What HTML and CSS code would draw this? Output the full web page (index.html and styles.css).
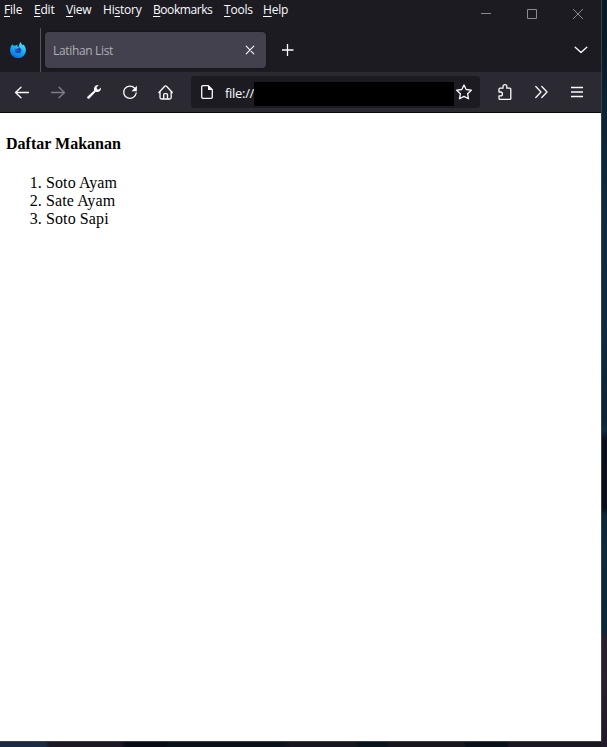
FILE: index.html
```html
<!DOCTYPE html>
<html lang="id">
<head>
<meta charset="utf-8">
<title>Latihan List</title>
<link rel="stylesheet" href="styles.css">
</head>
<body>
<div class="desktop">
<div class="window">
  <header class="titlebar">
    <nav class="menus">
      <span><u>F</u>ile</span><span><u>E</u>dit</span><span><u>V</u>iew</span><span>Hi<u>s</u>tory</span><span class="menu-wide"><u>B</u>ookmarks</span><span><u>T</u>ools</span><span><u>H</u>elp</span>
    </nav>
    <div class="controls">
      <svg width="12" height="12" viewBox="0 0 12 12"><path d="M1 5.5h10"/></svg>
      <svg width="12" height="12" viewBox="0 0 12 12"><path d="M1.500 1.500h9v9h-9z"/></svg>
      <svg width="12" height="12" viewBox="0 0 12 12"><path d="M1 1l10 10M11 1L1 11"/></svg>
    </div>
  </header>
  <div class="tabs">
    <div class="pinned">
      <svg width="16" height="16" viewBox="0 0 16 16">
        <defs>
          <linearGradient id="flame" x1=".8" y1="0" x2=".3" y2="1"><stop offset="0" stop-color="#62efff"/><stop offset=".45" stop-color="#18b5f5"/><stop offset="1" stop-color="#0868df"/></linearGradient>
        </defs>
        <path fill="url(#flame)" d="M2.400 2.200c.3.7.6 1.100 1 1.500.8-.2 1.600-.1 2.300.1.500-.6 1.200-1 1.900-1.100-.4.6-.5 1.100-.4 1.500l1.800.5c.1-1.900.500-3.500 1.700-4.600.4 1.800 1.400 2.400 2.300 3.400.2-.3.200-.7.100-1.200 1.800 1.500 2.800 3.600 2.800 6A7.900 7.700 0 0 1 .1 8.700C0 6 .9 3.700 2.400 2.200z"/>
        <path fill="#2942b5" d="M4.600 6.800l2.500.2c.5-.9 1.200-1.400 2-1.500 1.600.5 2.400 1.700 2.200 3.200-.3 1.800-1.600 2.700-3.300 2.600-1.800-.1-3.100-1.200-3.400-2.800 1 .6 2 .5 2.800-.2-1.400 0-2.300-.5-2.800-1.500z"/>
      </svg>
    </div>
    <div class="tab">
      <span>Latihan List</span>
      <svg width="10" height="10" viewBox="0 0 10 10"><path d="M1.200 1.200l7.600 7.600M8.800 1.200L1.200 8.800"/></svg>
    </div>
    <svg class="new-tab" width="12" height="12" viewBox="0 0 12 12"><path d="M5.500.5v11M0 6h11"/></svg>
    <svg class="all-tabs" width="14" height="8" viewBox="0 0 14 8"><path d="M1.200 1.200L7 6.600l5.800-5.400"/></svg>
  </div>
  <div class="toolbar">
    <div class="nav-buttons">
      <svg width="16" height="16" viewBox="0 0 16 16"><path d="M14.500 8.500H1.500M7 3.200L1.500 8.500 7 13.800"/></svg>
      <svg class="disabled" width="16" height="16" viewBox="0 0 16 16"><path d="M1.500 8.500h13M9 3.200l5.500 5.300L9 13.800"/></svg>
      <svg width="16" height="16" viewBox="0 0 16 16"><path class="solid" d="M12.700 1.200L10.600 3.300 11 5.200l1.900.3 2.100-2.100c.3 2.400-1.400 4.500-3.800 4.600-.6 0-1-.1-1.500-.2l-6.100 6.500c-.5.600-1.300.700-1.900.2-.7-.5-.7-1.400-.1-2l6.600-6.100C7.200 3.700 9.600.500 12.700 1.200z"/></svg>
      <svg width="16" height="16" viewBox="0 0 16 16"><path d="M12.700 4.200A6.300 6.100 0 1 0 14.200 9"/><path class="solid" d="M14.900 1.800v5.400H9.500z"/></svg>
      <svg width="16" height="16" viewBox="0 0 16 16"><path d="M.9 8.500L6.700 2.300q.9-.9 1.800 0l5.800 6.200M2 7.500v6q0 1.500 1.500 1.500h8.200q1.500 0 1.500-1.500v-6M5.700 14.700v-4q0-1 1-1h1.800q1 0 1 1v4"/></svg>
    </div>
    <div class="urlbar">
      <svg width="14" height="16" viewBox="0 0 14 16"><path d="M8.300 1.700H3Q1.700 1.700 1.700 3v10q0 1.300 1.300 1.300h8q1.300 0 1.300-1.300V5.700z"/><path class="solid" d="M8 1.500V6h4.500z"/></svg>
      <span class="url">file://</span>
      <span class="redaction"></span>
      <svg width="18" height="18" viewBox="0 0 18 18"><path d="M9 2l2.200 4.500 5.100.7-3.700 3.500.9 5.100L9 13.400l-4.500 2.400.9-5.100L1.700 7.200l5.100-.7z"/></svg>
    </div>
    <div class="tools">
      <svg width="16" height="18" viewBox="0 0 16 18"><path d="M2 9V6.200q0-1 1-1h3V3.500a1.900 1.900 0 0 1 3.800 0v1.700h3q1 0 1 1v9.200q0 1-1 1H3q-1 0-1-1v-2.500h1.500a1.900 1.900 0 0 0 0-3.900z"/></svg>
      <svg width="14" height="14" viewBox="0 0 14 14"><path d="M.8 1.500L6 7 .8 12.500M6.800 1.500L12 7l-5.200 5.500"/></svg>
      <svg width="12" height="12" viewBox="0 0 12 12"><path d="M0 1.500h12M0 6h12M0 10.500h12"/></svg>
    </div>
  </div>
  <main class="page">
    <h4>Daftar Makanan</h4>
    <ol>
      <li>Soto Ayam</li>
      <li>Sate Ayam</li>
      <li>Soto Sapi</li>
    </ol>
  </main>
</div>
</div>
</body>
</html>
```
FILE: styles.css
```css
* { box-sizing: border-box; }
body { margin: 0; }
svg { display: block; flex: none; fill: none; stroke: #fbfbfe; stroke-width: 1.3; stroke-linecap: round; stroke-linejoin: round; }
.solid { fill: #fbfbfe; stroke: none; }
.desktop {
  width: 607px;
  height: 747px;
  overflow: hidden;
  background:
    linear-gradient(90deg, #1d2b40 0 45px, #1c1722 50px 120px, #080b16 126px 165px, #0b1119 170px 280px, #17151d 290px 355px, #09131b 360px 385px, #18151d 390px 463px, #071117 467px 505px, #1b1721 510px) 0 100% / 601px 6px no-repeat,
    linear-gradient(#08192a 0, #071b2a 60px, #0a2436 110px, #0c2b42 220px, #0d2b43 330px, #0a2438 420px, #0e2c43 430px, #090f1c 440px, #0a0e1a 508px, #0b2738 515px, #0b2b3d 555px, #08283a 630px, #261f2e 638px, #2a202e 680px, #211a28 100%);
}
.window { width: 602px; height: 742px; border: solid #3c4045; border-width: 0 1px 1px 0; display: flex; flex-direction: column; background: #fff; }
.titlebar { height: 28px; flex: none; display: flex; justify-content: space-between; background: #1c1b22; }
.menus { display: grid; grid-template-columns: 30px 32px 37px 50px 71px 39px 30px; padding: 1px 0 0 4px; font: 12px/18px "Open Sans", "Noto Sans", sans-serif; color: #fbfbfe; letter-spacing: -.2px; }
.menus span { white-space: nowrap; }
.menus .menu-wide { letter-spacing: -.43px; }
.menus u { text-underline-offset: 2px; text-decoration-thickness: 1px; }
.controls { display: flex; gap: 34px; padding: 8px 17px 0 0; }
.controls svg { stroke: #8b8a90; stroke-width: 1; stroke-linecap: butt; stroke-linejoin: miter; }
.tabs { height: 44px; flex: none; display: flex; align-items: center; background: #1c1b22; }
.pinned { width: 41px; height: 44px; padding: 14px 0 0 10px; border-right: 1px solid #55545d; }
.pinned svg { stroke: none; }
.tab { width: 221px; height: 36px; margin-left: 4px; padding: 0 11px 0 8px; border-radius: 4px; background: #42414d; box-shadow: 0 0 3px #111016; display: flex; align-items: center; justify-content: space-between; font: 12px/18px "Open Sans", "Noto Sans", sans-serif; letter-spacing: -.33px; color: #b0afb5; }
.tab span { padding-top: 2px; }
.tab svg { stroke-width: 1.1; }
.new-tab { margin-left: 16px; }
.all-tabs { margin: 0 13px 0 auto; }
.toolbar { height: 41px; flex: none; display: flex; align-items: center; background: #2b2a33; border-bottom: 1px solid #08080c; }
.nav-buttons { width: 191px; padding-left: 14px; display: flex; gap: 20px; }
.disabled { opacity: .4; }
.urlbar { width: 289px; height: 32px; padding-left: 9px; display: flex; align-items: center; border-radius: 4px; background: #1c1b22; }
.url { width: 29px; margin-left: 11px; padding-top: 2px; font: 13px/18px "Open Sans", "Noto Sans", sans-serif; letter-spacing: -.3px; color: #fbfbfe; white-space: nowrap; }
.redaction { width: 200px; height: 24px; margin: 4px 1px 0 0; background: #000; position: relative; }
.tools { flex: 1; padding: 0 18px 0 17px; display: flex; align-items: center; justify-content: space-between; }
.tools svg:last-child { stroke-linecap: butt; }
.page { flex: 1; padding-left: 6px; font: 16px/18px "Liberation Serif", "Times New Roman", serif; color: #000; }
.page h4 { margin: 22px 0 21px; }
.page ol { margin: 0; padding-left: 40px; letter-spacing: .1px; }
```
